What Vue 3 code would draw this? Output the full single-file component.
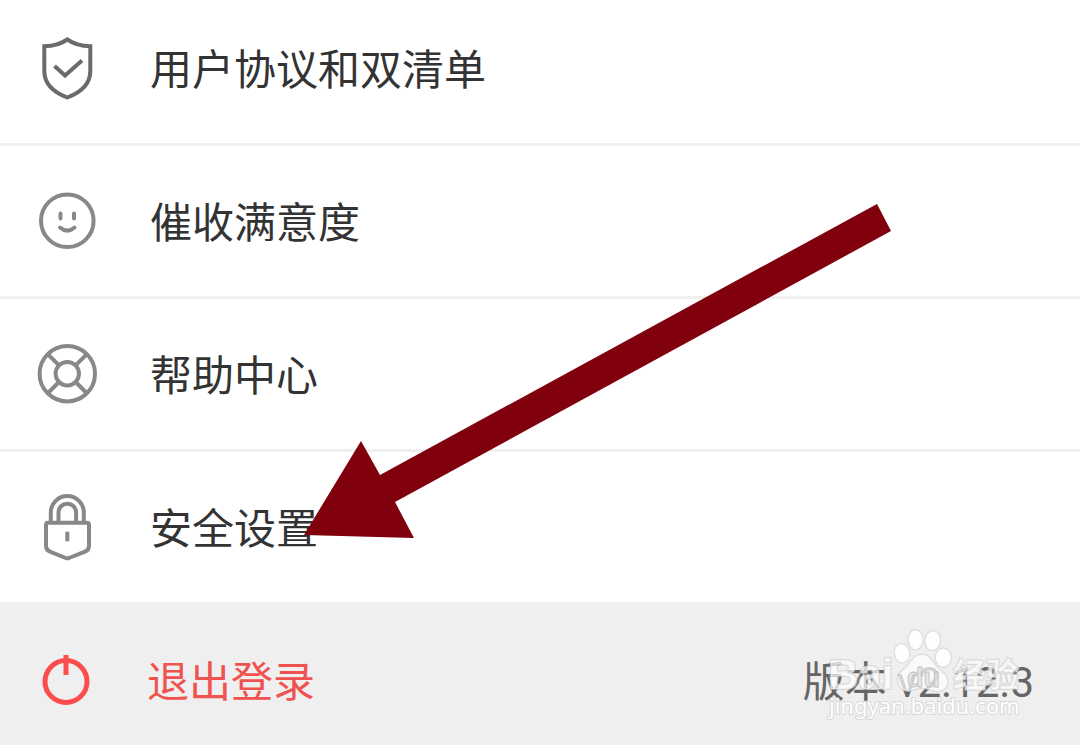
<script setup>
const items = [
  { icon: 'shield', label: '用户协议和双清单' },
  { icon: 'smile', label: '催收满意度' },
  { icon: 'help', label: '帮助中心' },
  { icon: 'lock', label: '安全设置' }
]
</script>

<template>
  <main class="page">
    <nav class="menu">
      <button v-for="item in items" :key="item.icon" type="button" class="row">
        <svg class="icon" :class="item.icon" viewBox="0 0 64 72" aria-hidden="true">
          <template v-if="item.icon === 'shield'">
            <path d="M32.3 7.5Q23 14 9.3 14.3V39C9.3 53 19 60.5 32.3 65.5C45.6 60.5 55.3 53 55.3 39V14.3Q41.6 14 32.3 7.5Z" />
            <path d="M19.5 34L30 43.5L47 28.5" />
          </template>
          <template v-else-if="item.icon === 'smile'">
            <circle cx="32.3" cy="35.7" r="26.3" />
            <path stroke-linecap="round" d="M25.5 28.5V33.5M39 28.5V33.5M25 42.5Q32.3 48.7 39.5 42.5" />
          </template>
          <template v-else-if="item.icon === 'help'">
            <circle cx="32.3" cy="35.7" r="27.7" />
            <circle cx="32.3" cy="35.7" r="11.7" />
            <path d="M24 27.4L13 16.4M40.6 27.4L51.6 16.4M24 44L13 55M40.6 44L51.6 55" />
          </template>
          <template v-else>
            <path d="M15.8 31V21.5a16.5 16.5 0 0 1 33 0V31M23.5 31V21.5a8.8 8.8 0 0 1 17.6 0V31" />
            <path d="M13 31.7H52Q54 31.7 54 33.7V55Q54 59 50 60.7L34 67Q32.3 67.6 30.6 67L15 60.7Q11 59 11 55V33.7Q11 31.7 13 31.7Z" />
            <path d="M32.3 40.7V50.3" />
          </template>
        </svg>
        <span class="label">{{ item.label }}</span>
      </button>
    </nav>

    <footer class="footer">
      <button type="button" class="logout">
        <svg class="icon power" viewBox="0 0 64 72" aria-hidden="true">
          <circle cx="31" cy="37.5" r="21" />
          <path d="M31 11V31" />
        </svg>
        <span class="label">退出登录</span>
      </button>
      <span class="version">版本 v2.12.3</span>

      <svg class="watermark" viewBox="0 0 210 100" aria-hidden="true">
        <g class="mark">
          <text class="brand" x="8" y="64">Bai</text>
          <g class="toes">
            <ellipse cx="95.5" cy="14.7" rx="7" ry="9.7" />
            <ellipse cx="112.7" cy="15.7" rx="7.3" ry="9.5" transform="rotate(8 112.7 15.7)" />
            <ellipse cx="82" cy="28.3" rx="7.3" ry="9.3" transform="rotate(-8 82 28.3)" />
            <ellipse cx="123.3" cy="32.7" rx="7.5" ry="9.3" />
          </g>
          <path d="M102 29.5C108 29.5 111 34 115 40C119 45 128 49 127.5 57C127 64 122 66.5 116 66C110 65 106 63 102 63C97 63 93 65 89 66C82 66.5 78 61 77.7 55C77.5 47 85 45 89 39C93 33 96 29.5 102 29.5Z" />
          <text class="exp" x="133" y="62">经验</text>
          <text class="url" x="9" y="89">jingyan.baidu.com</text>
        </g>
        <text class="du" x="87" y="62">du</text>
      </svg>
    </footer>

    <svg class="arrow" viewBox="0 0 587 334" aria-hidden="true">
      <path d="M0 331L57 237L76 271L573 0L587 27L91 298L110 334Z" />
    </svg>
  </main>
</template>

<style>
body {
  margin: 0;
}
</style>

<style scoped>
.page {
  position: relative;
  display: flex;
  flex-direction: column;
  min-height: 100vh;
  overflow: hidden;
  background: #fff;
  font-family: Roboto, "Noto Sans CJK SC", sans-serif;
  font-size: 42px;
  line-height: 60px;
}

.menu {
  display: flex;
  flex-direction: column;
  margin-top: -7px;
}

button {
  display: flex;
  align-items: center;
  margin: 0;
  border: 0;
  background: none;
  font: inherit;
  text-align: left;
  cursor: pointer;
}

.row {
  gap: 51px;
  padding: 39px 35px;
  border-bottom: 3px solid #efefef;
  color: #333;
}

.row:last-child {
  border-bottom: 0;
}

.icon {
  flex: none;
  width: 64px;
  height: 72px;
  fill: none;
  stroke: #888;
  stroke-width: 4;
}

.shield {
  stroke: #6b6b6b;
}

.power {
  stroke: #fb4d4d;
  stroke-width: 5;
}

.label {
  padding-top: 6px;
}

.footer {
  position: relative;
  flex: 1;
  display: flex;
  align-items: flex-start;
  justify-content: space-between;
  padding: 42px 46px 29px 35px;
  background: #efefef;
}

.logout {
  gap: 48px;
  padding: 0;
  color: #ef5350;
}

.version {
  padding-top: 9px;
  color: #666;
}

.watermark {
  position: absolute;
  top: 23px;
  right: 50px;
  width: 210px;
  height: 100px;
}

.mark {
  fill: #fff;
  fill-opacity: 0.7;
  stroke: #c8c8c8;
  stroke-opacity: 0.6;
  stroke-width: 2;
  paint-order: stroke;
}

.toes {
  fill-opacity: 0.9;
}

.brand {
  font: bold 42px "Liberation Sans", sans-serif;
}

.exp {
  font: bold 33px "Noto Sans CJK SC", sans-serif;
}

.url {
  font: 22px "Noto Sans", sans-serif;
  fill-opacity: 1;
}

.du {
  font: bold 27px "Liberation Sans", sans-serif;
  fill: #ddd;
  fill-opacity: 0.6;
  stroke: #c4c4c4;
  stroke-width: 1;
}

.arrow {
  position: absolute;
  top: 204px;
  left: 304px;
  width: 587px;
  height: 334px;
  fill: #80000d;
  pointer-events: none;
}
</style>
